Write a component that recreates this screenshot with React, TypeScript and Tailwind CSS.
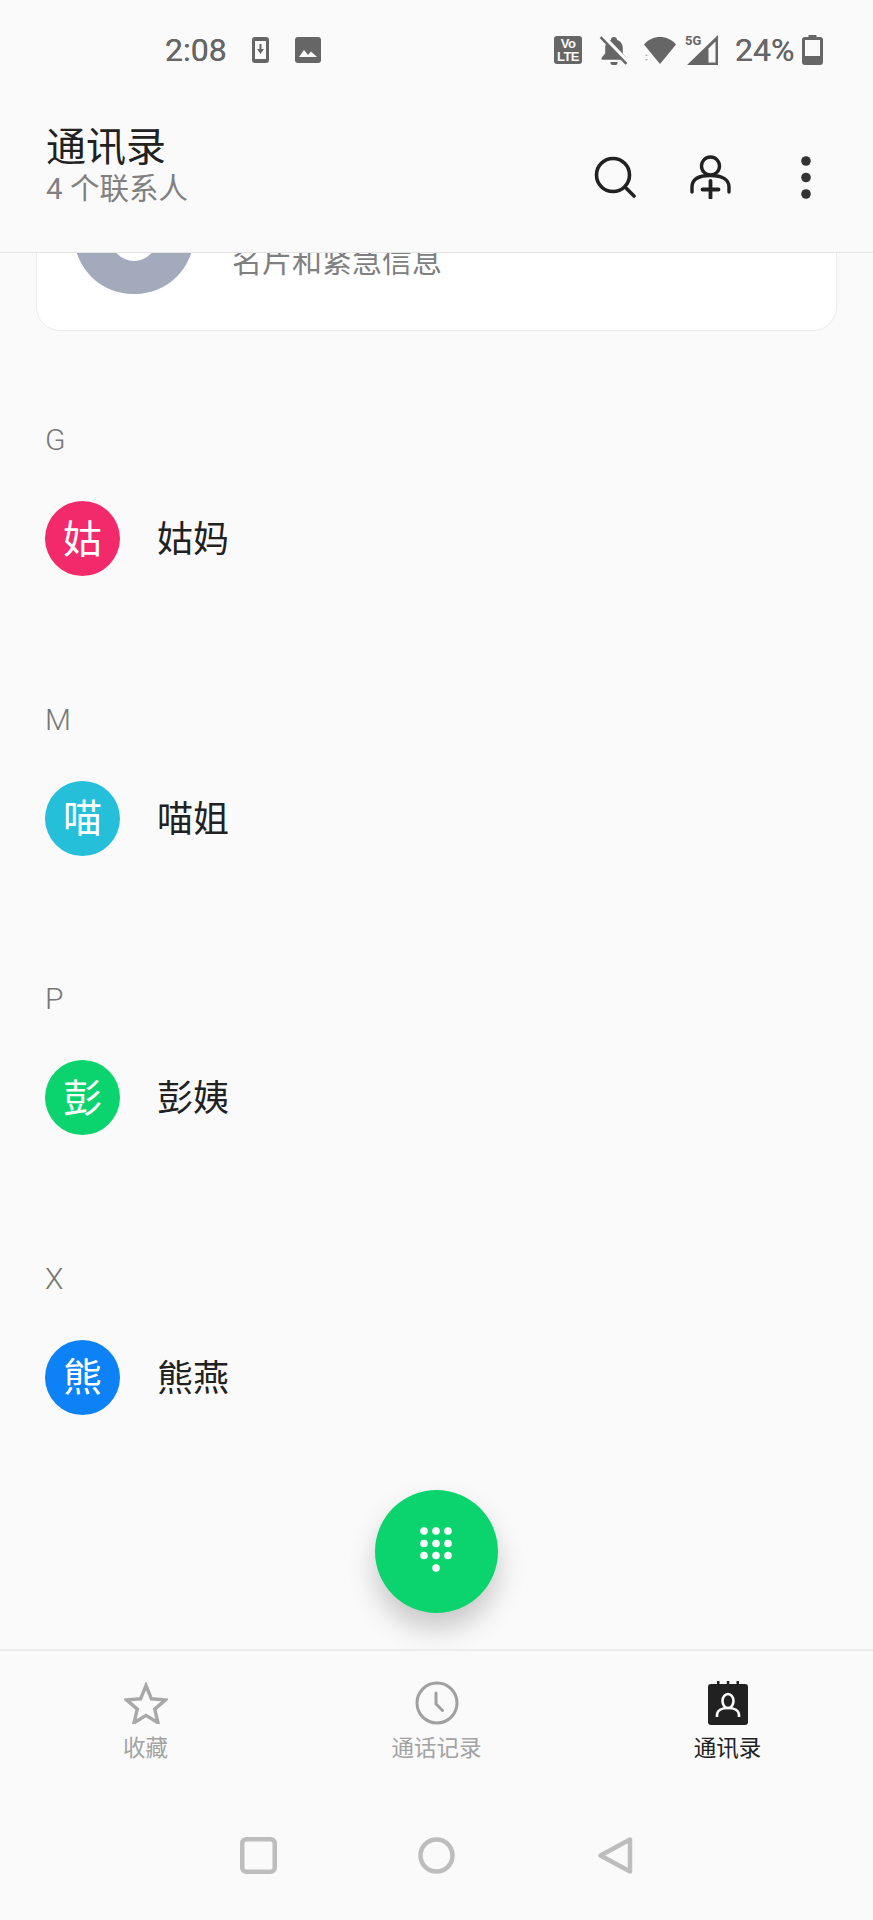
const sections = [
  { letter: "G", name: "姑妈", initial: "姑", color: "bg-[#f22a6b]" },
  { letter: "M", name: "喵姐", initial: "喵", color: "bg-[#26bfd9]" },
  { letter: "P", name: "彭姨", initial: "彭", color: "bg-[#0bd46f]" },
  { letter: "X", name: "熊燕", initial: "熊", color: "bg-[#0d82f7]" },
];

const fontStack = "font-['Roboto','Noto_Sans_CJK_SC',sans-serif]";

function StatusIcons() {
  return (
    <div className="flex h-[82px] items-center pt-[18px] text-[#666]">
      <span className="ml-[165px] w-[62px] text-[32px] leading-none font-normal [text-shadow:0_0_0.5px_#666]">2:08</span>
      {/* download on phone */}
      <svg className="ml-[25px] h-[26px] w-[17px]" viewBox="0 0 17 26">
        <rect width="17" height="26" rx="3" fill="#666" />
        <rect x="3" y="4" width="11" height="18" fill="#fafafa" />
        <path d="M7.5 7h2v5h2.500l-3.500 5-3.500-5h2.500z" fill="#666" />
      </svg>
      {/* picture */}
      <svg className="ml-[26px] h-[26px] w-[26px]" viewBox="0 0 26 26">
        <rect width="26" height="26" rx="3" fill="#666" />
        <path d="M4 20l5-7 4 5 3-3.500 6 5.500z" fill="#fafafa" />
      </svg>
      {/* VoLTE */}
      <div className="ml-[233px] flex h-[28px] w-[28px] flex-col items-center justify-center rounded-[3px] bg-[#666] font-['Liberation_Sans',sans-serif] text-[13px] leading-[13px] font-bold tracking-[-0.5px] text-[#fafafa]">
        <span>Vo</span>
        <span>LTE</span>
      </div>
      {/* bell off */}
      <svg className="ml-[17px] h-[29px] w-[30px]" viewBox="0 0 29 28">
        <path d="M14.500 1c-1.700 0-3 1.200-3 2.800C8 5 6 8 6 11.500v5.500l-3.500 4v2h24v-2l-3.500-4v-5.500c0-3.500-2-6.500-5.500-7.700 0-1.600-1.300-2.800-3-2.800z" fill="#666" />
        <path d="M11 25a3.500 3.500 0 0 0 7 0z" fill="#666" />
        <path d="M3 0l25 26" stroke="#fafafa" strokeWidth="5" />
        <path d="M1.500 1l25 26" stroke="#666" strokeWidth="2.400" />
      </svg>
      {/* wifi */}
      <svg className="ml-[14px] h-[28px] w-[34px]" viewBox="0 0 34 28">
        <path d="M1 8.500C5 3.500 11 1 17 1s12 2.500 16 7.500L17 28z" fill="#666" />
        <path d="M2 20l1.500-2 1.500 2zM2 23h3l-1.500 2z" fill="#bbb" />
      </svg>
      {/* 5G signal */}
      <div className="relative ml-[9px] h-[30px] w-[33px]">
        <svg className="absolute inset-0 h-full w-full" viewBox="0 0 33 30">
          <path d="M32 0v30H1z" fill="#666" />
          <path d="M29.500 6.500v21h-7v-14z" fill="#fafafa" />
        </svg>
        <span className="absolute top-[-1px] left-[-1px] bg-[#fafafa] pr-[1px] text-[13px] leading-[14px] font-bold">5G</span>
      </div>
      <span className="ml-[16px] w-[57px] text-[32px] leading-none font-normal whitespace-nowrap [text-shadow:0_0_0.5px_#666]">24%</span>
      {/* battery */}
      <svg className="ml-[10px] h-[30px] w-[21px]" viewBox="0 0 21 30">
        <path d="M6.500 0h8v2h3.500a3 3 0 0 1 3 3v22a3 3 0 0 1-3 3H3a3 3 0 0 1-3-3V5a3 3 0 0 1 3-3h3.500z" fill="#666" />
        <rect x="3" y="5" width="15" height="16" fill="#fafafa" />
      </svg>
    </div>
  );
}

function Header() {
  return (
    <header className="z-10 h-[253px] shrink-0 border-b border-[#e4e4e4] bg-[#fafafa]">
      <StatusIcons />
      <div className="flex items-start justify-between">
        <div className="pt-[44px] pl-[46px]">
          <div className="text-[40px] leading-[44px] text-[#212121]">通讯录</div>
          <div className="pt-[2px] text-[29.500px] leading-[35px] text-[#808080]">4 个联系人</div>
        </div>
        <div className="flex items-center pt-[73px] pr-[62px]">
          <svg className="h-[42px] w-[42px]" viewBox="0 0 42 42" fill="none" stroke="#212121" strokeWidth="3.600" strokeLinecap="round">
            <circle cx="19" cy="19" r="16.500" />
            <path d="M31 31l9 9" />
          </svg>
          <svg className="ml-[54px] h-[44px] w-[41px]" viewBox="0 0 41 44" fill="none" stroke="#212121" strokeWidth="3.400" strokeLinecap="round">
            <circle cx="20.500" cy="11" r="9" />
            <path d="M2 37v-5c0-7 6-11.500 18.500-11.500S39 25 39 32v5" />
            <path d="M20.500 26v17M12.500 34.500h16" strokeWidth="3.800" />
          </svg>
          <svg className="ml-[70px] h-[43px] w-[10px]" viewBox="0 0 10 43" fill="#333">
            <circle cx="5" cy="5" r="4.800" />
            <circle cx="5" cy="21.500" r="4.800" />
            <circle cx="5" cy="38" r="4.800" />
          </svg>
        </div>
      </div>
    </header>
  );
}

function ProfileCard() {
  return (
    <div className="mx-[36px] mt-[-77px] flex h-[155px] rounded-[24px] border border-[#ececec] bg-white pl-[37px]">
      <div className="relative mt-[-1px] h-[118px] w-[120px] shrink-0 rounded-full bg-[#a3aabb]">
        <div className="absolute top-[38px] left-[37px] h-[47px] w-[46px] rounded-full bg-white" />
      </div>
      <div className="ml-[38px] pt-[67px] text-[30px] leading-[36px] text-[#808080]">名片和紧急信息</div>
    </div>
  );
}

function ContactSection({ letter, name, initial, color }: (typeof sections)[number]) {
  return (
    <section className="h-[279.5px] pl-[45px]">
      <div className="text-[30px] leading-[36px] font-light text-[#777]">{letter}</div>
      <div className="mt-[43px] flex items-center">
        <div className={`flex h-[75px] w-[75px] items-center justify-center rounded-full pt-[3px] text-[39px] text-white ${color}`}>
          {initial}
        </div>
        <div className="ml-[37px] pt-[3px] text-[36px] leading-none text-[#212121]">{name}</div>
      </div>
    </section>
  );
}

function Tab({ label, active, children }: { label: string; active?: boolean; children: React.ReactNode }) {
  return (
    <div className="flex w-[291px] flex-col items-center">
      <div className="flex h-[44px] items-center justify-center">{children}</div>
      <div className={`mt-[8px] text-[22.500px] leading-[30px] ${active ? "text-[#212121]" : "text-[#a3a3a3]"}`}>{label}</div>
    </div>
  );
}

function BottomNav() {
  return (
    <nav className="z-10 h-[271px] shrink-0 border-t-2 border-[#ececec] bg-[#fafafa]">
      <div className="flex pt-[30px]">
        <Tab label="收藏">
          <svg className="h-[42px] w-[44px]" viewBox="0 0 44 42" fill="none" stroke="#a8a8a8" strokeWidth="3.400" strokeLinejoin="miter">
            <path d="M22 3.500l5.400 13.300 14 1.100-10.700 9.300 3.300 13.600L22 33.400 10 40.800l3.300-13.600L2.600 17.900l14-1.100z" />
          </svg>
        </Tab>
        <Tab label="通话记录">
          <svg className="h-[44px] w-[44px]" viewBox="0 0 44 44" fill="none" stroke="#a0a0a0" strokeWidth="3" strokeLinecap="round">
            <circle cx="22" cy="22" r="20" />
            <path d="M21 12v11l6.500 6.500" />
          </svg>
        </Tab>
        <Tab label="通讯录" active>
          <svg className="h-[44px] w-[40px]" viewBox="0 0 40 44">
            <rect y="3" width="40" height="41" rx="3" fill="#212121" />
            <path d="M9 0h2.500v4H9zM18.800 0h2.500v4h-2.500zM28.500 0H31v4h-2.500z" fill="#212121" />
            <ellipse cx="20" cy="20" rx="5.500" ry="7" fill="none" stroke="#fafafa" strokeWidth="2.600" />
            <path d="M9 36v-2c0-4.500 4.500-7 11-7s11 2.500 11 7v2" fill="none" stroke="#fafafa" strokeWidth="2.600" />
          </svg>
        </Tab>
      </div>
      <div className="mt-[74px] flex items-center justify-center">
        <svg className="h-[37px] w-[37px]" viewBox="0 0 37 37" fill="none" stroke="#bdbdbd" strokeWidth="4.500">
          <rect x="2.250" y="2.250" width="32.500" height="32.500" rx="4" />
        </svg>
        <svg className="ml-[141px] h-[37px] w-[37px]" viewBox="0 0 37 37" fill="none" stroke="#bdbdbd" strokeWidth="4.500">
          <circle cx="18.500" cy="18.500" r="16" />
        </svg>
        <svg className="ml-[143px] h-[37px] w-[35px]" viewBox="0 0 35 37" fill="none" stroke="#bdbdbd" strokeWidth="4.500" strokeLinejoin="round">
          <path d="M32 2.500v32L2.500 18.500z" />
        </svg>
      </div>
    </nav>
  );
}

export default function App() {
  return (
    <div className={`flex h-[1920px] w-[873px] flex-col overflow-hidden bg-[#fafafa] ${fontStack}`}>
      <Header />
      <main className="relative min-h-0 flex-1">
        <div className="h-full overflow-hidden">
          <ProfileCard />
          <div className="pt-[91px]">
            {sections.map((s) => (
              <ContactSection key={s.letter} {...s} />
            ))}
          </div>
        </div>
        {/* dial pad */}
        <button className="absolute top-[1237px] left-[375px] flex h-[123px] w-[123px] items-center justify-center rounded-full bg-[#0bd46f] pt-[1px] pr-[2px] shadow-[0_16px_28px_rgba(0,0,0,0.2)]">
          <svg className="h-[50px] w-[34px]" viewBox="0 0 34 50" fill="#fff">
            {[4, 16.500, 28.500].map((y) =>
              [5, 17, 29].map((x) => <circle key={`${x}-${y}`} cx={x} cy={y} r="3.800" />)
            )}
            <circle cx="17" cy="41" r="3.800" />
          </svg>
        </button>
      </main>
      <BottomNav />
    </div>
  );
}
